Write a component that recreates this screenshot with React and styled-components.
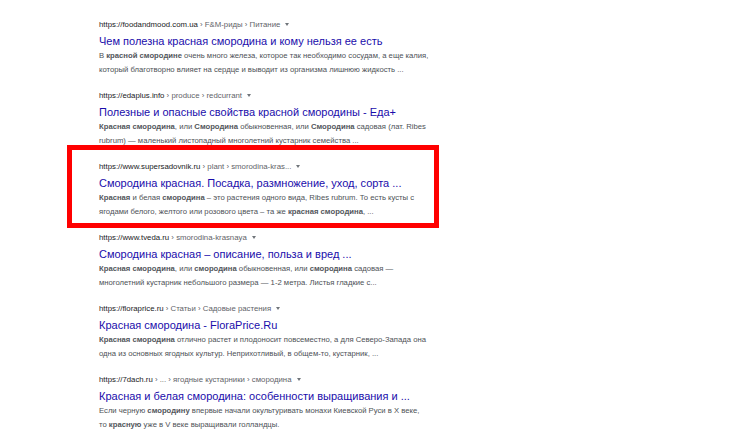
import React from "react";
import styled, { createGlobalStyle } from "styled-components";

const Global = createGlobalStyle`
  html, body { margin: 0; padding: 0; background: #ffffff; }
  body { font-family: "Liberation Sans", Arial, sans-serif; }
`;

const Page = styled.main`
  width: 730px;
  height: 431px;
  overflow: hidden;
  background: #fff;
  padding: 18px 0 0 99px;
  box-sizing: border-box;
  display: flex;
  flex-direction: column;
  gap: 12px;
`;

const Result = styled.section`
  position: relative;
  width: 340px;
  display: flex;
  flex-direction: column;
  ${(p) =>
    p.$highlight &&
    `
    &::before {
      content: "";
      position: absolute;
      left: -32px;
      top: -15px;
      right: 0;
      bottom: -9px;
      border: 5px solid #ff0000;
      pointer-events: none;
    }
  `}
`;

const Cite = styled.div`
  height: 14px;
  font-size: 7.8px;
  line-height: 14px;
  color: #202124;
  white-space: nowrap;
`;

const Crumbs = styled.span`
  color: #5f6368;
`;

const Caret = styled.span`
  display: inline-block;
  vertical-align: middle;
  margin-left: 5px;
  width: 0;
  height: 0;
  border-left: 2.5px solid transparent;
  border-right: 2.5px solid transparent;
  border-top: 3px solid #70757a;
`;

const Title = styled.a`
  display: block;
  margin-top: 1px;
  font-size: 11px;
  line-height: 16px;
  color: #1a0dab;
  text-decoration: none;
  white-space: nowrap;
`;

const Snippet = styled.div`
  font-size: 7.7px;
  line-height: 14px;
  color: #4d5156;
  white-space: nowrap;
  b {
    font-weight: bold;
    color: #52565b;
  }
`;

const results = [
  {
    host: "https://foodandmood.com.ua",
    crumbs: " › F&M-риды › Питание",
    title: "Чем полезна красная смородина и кому нельзя ее есть",
    lines: [
      <>
        В <b>красной смородине</b> очень много железа, которое так необходимо сосудам, а еще калия,
      </>,
      <>который благотворно влияет на сердце и выводит из организма лишнюю жидкость ...</>,
    ],
  },
  {
    host: "https://edaplus.info",
    crumbs: " › produce › redcurrant",
    title: "Полезные и опасные свойства красной смородины - Еда+",
    lines: [
      <>
        <b>Красная смородина</b>, или <b>Смородина</b> обыкновенная, или <b>Смородина</b> садовая (лат. Ribes
      </>,
      <>rubrum) — маленький листопадный многолетний кустарник семейства ...</>,
    ],
  },
  {
    host: "https://www.supersadovnik.ru",
    crumbs: " › plant › smorodina-kras...",
    title: "Смородина красная. Посадка, размножение, уход, сорта ...",
    highlight: true,
    lines: [
      <>
        <b>Красная</b> и белая <b>смородина</b> – это растения одного вида, Ribes rubrum. То есть кусты с
      </>,
      <>
        ягодами белого, желтого или розового цвета – та же <b>красная смородина</b>, ...
      </>,
    ],
  },
  {
    host: "https://www.tveda.ru",
    crumbs: " › smorodina-krasnaya",
    title: "Смородина красная – описание, польза и вред ...",
    lines: [
      <>
        <b>Красная смородина</b>, или <b>смородина</b> обыкновенная, или <b>смородина</b> садовая —
      </>,
      <>многолетний кустарник небольшого размера — 1-2 метра. Листья гладкие с...</>,
    ],
  },
  {
    host: "https://floraprice.ru",
    crumbs: " › Статьи › Садовые растения",
    title: "Красная смородина - FloraPrice.Ru",
    lines: [
      <>
        <b>Красная смородина</b> отлично растет и плодоносит повсеместно, а для Северо-Запада она
      </>,
      <>одна из основных ягодных культур. Неприхотливый, в общем-то, кустарник, ...</>,
    ],
  },
  {
    host: "https://7dach.ru",
    crumbs: " › ... › ягодные кустарники › смородина",
    title: "Красная и белая смородина: особенности выращивания и ...",
    lines: [
      <>
        Если черную <b>смородину</b> впервые начали окультуривать монахи Киевской Руси в X веке,
      </>,
      <>
        то <b>красную</b> уже в V веке выращивали голландцы.
      </>,
    ],
  },
];

export default function App() {
  return (
    <>
      <Global />
      <Page>
        {results.map((r, i) => (
          <Result key={i} $highlight={r.highlight}>
            <Cite>
              {r.host}
              <Crumbs>{r.crumbs}</Crumbs>
              <Caret />
            </Cite>
            <Title href="#">{r.title}</Title>
            {r.lines.map((l, j) => (
              <Snippet key={j}>{l}</Snippet>
            ))}
          </Result>
        ))}
      </Page>
    </>
  );
}
